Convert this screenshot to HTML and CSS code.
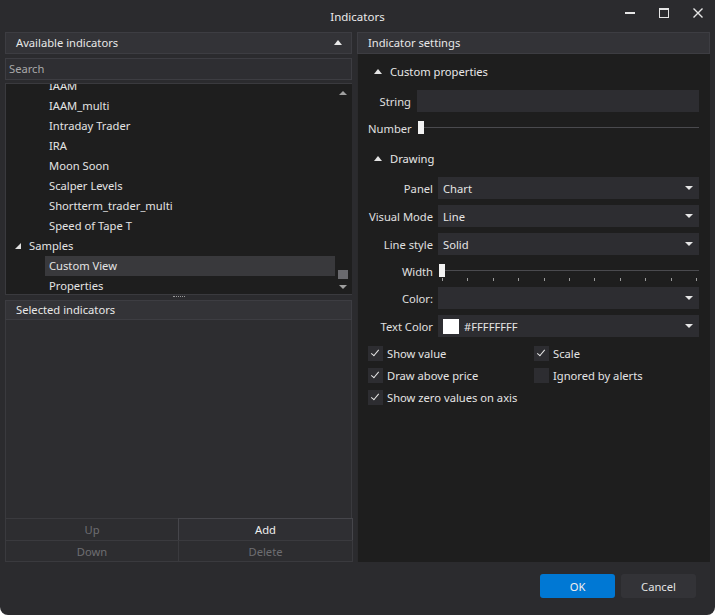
FILE: index.html
```html
<!DOCTYPE html>
<html>
<head>
<meta charset="utf-8">
<link rel="stylesheet" href="styles.css">
</head>
<body>
<div class="window">
  <div class="titlebar">
    <div class="title">Indicators</div>
    <div class="controls">
      <svg class="ctl" width="14" height="14" viewBox="0 0 14 14"><rect x="2" y="6" width="10" height="2" fill="#e6e6e6"/></svg>
      <svg class="ctl" width="14" height="14" viewBox="0 0 14 14"><rect x="2.5" y="2.5" width="9" height="9" fill="none" stroke="#e6e6e6" stroke-width="1"/><rect x="2" y="2" width="10" height="2" fill="#e6e6e6"/></svg>
      <svg class="ctl" width="14" height="14" viewBox="0 0 14 14"><path d="M2.5 2.5 L11.5 11.5 M11.5 2.5 L2.5 11.5" stroke="#e6e6e6" stroke-width="1.4"/></svg>
    </div>
  </div>
  <div class="main">
    <div class="left">
      <div class="phead"><span>Available indicators</span><span class="uptri"></span></div>
      <div class="search">Search</div>
      <div class="tree">
        <div class="tree-items">
          <div class="item">IAAM</div>
          <div class="item">IAAM_multi</div>
          <div class="item">Intraday Trader</div>
          <div class="item">IRA</div>
          <div class="item">Moon Soon</div>
          <div class="item">Scalper Levels</div>
          <div class="item">Shortterm_trader_multi</div>
          <div class="item">Speed of Tape T</div>
          <div class="item group"><span class="exp"></span>Samples</div>
          <div class="item sel">Custom View</div>
          <div class="item">Properties</div>
        </div>
        <div class="vscroll">
          <span class="sb-up"></span>
          <span class="sb-thumb"></span>
          <span class="sb-down"></span>
        </div>
      </div>
      <div class="splitter"><span class="grip"></span></div>
      <div class="phead small"><span>Selected indicators</span></div>
      <div class="selbody"></div>
      <div class="btngrid">
        <div class="btn dis">Up</div>
        <div class="btn act">Add</div>
        <div class="btn dis">Down</div>
        <div class="btn dis">Delete</div>
      </div>
    </div>
    <div class="right">
      <div class="phead"><span>Indicator settings</span></div>
      <div class="settings">
        <div class="sec"><span class="uptri w"></span>Custom properties</div>
        <div class="form f1">
          <div class="lbl">String</div>
          <div class="input"></div>
          <div class="lbl">Number</div>
          <div class="slider"><span class="thumb"></span><span class="track"></span></div>
        </div>
        <div class="sec sec2"><span class="uptri w"></span>Drawing</div>
        <div class="form f2">
          <div class="lbl">Panel</div>
          <div class="combo"><span>Chart</span><span class="dn"></span></div>
          <div class="lbl">Visual Mode</div>
          <div class="combo"><span>Line</span><span class="dn"></span></div>
          <div class="lbl">Line style</div>
          <div class="combo"><span>Solid</span><span class="dn"></span></div>
          <div class="lbl">Width</div>
          <div class="slider sw">
            <span class="thumb"></span><span class="track"></span>
            <div class="ticks"><i></i><i></i><i></i><i></i><i></i><i></i><i></i><i></i><i></i><i></i><i></i></div>
          </div>
          <div class="lbl">Color:</div>
          <div class="combo"><span></span><span class="dn"></span></div>
          <div class="lbl">Text Color</div>
          <div class="combo"><span class="swatchrow"><span class="swatch"></span>#FFFFFFFF</span><span class="dn"></span></div>
        </div>
        <div class="checks">
          <label class="chk"><span class="box on"></span>Show value</label>
          <label class="chk"><span class="box on"></span>Scale</label>
          <label class="chk"><span class="box on"></span>Draw above price</label>
          <label class="chk"><span class="box"></span>Ignored by alerts</label>
          <label class="chk"><span class="box on"></span>Show zero values on axis</label>
        </div>
      </div>
    </div>
  </div>
  <div class="footer">
    <div class="fbtn ok">OK</div>
    <div class="fbtn cancel">Cancel</div>
  </div>
</div>
</body>
</html>
```
FILE: styles.css
```css
html, body { margin: 0; padding: 0; background: #ffffff; }
body { width: 715px; height: 615px; overflow: hidden; }
.window {
  width: 715px; height: 615px; background: #2b2b2e;
  border-radius: 0 0 8px 8px; display: flex; flex-direction: column;
  font-family: "Noto Sans", "Open Sans", sans-serif; font-size: 11.2px; color: #e6e6e6;
  box-sizing: border-box; overflow: hidden;
}
.titlebar { height: 32px; position: relative; display: flex; align-items: center; justify-content: center; flex: none; }
.title { font-size: 11.5px; color: #ececec; }
.controls { position: absolute; right: 10px; top: 6px; display: flex; gap: 20px; }
.ctl { display: block; }
.main { flex: none; height: 530px; display: flex; gap: 5px; padding: 0 5px; }
.left { width: 347px; display: flex; flex-direction: column; }
.right { width: 353px; display: flex; flex-direction: column; }
.phead {
  height: 22px; box-sizing: border-box; background: #333337; border: 1px solid #3d3d42;
  display: flex; align-items: center; justify-content: space-between; padding: 0 9px 1px 10px;
  color: #e8e8e8; flex: none;
}
.phead.small { height: 20px; }
.uptri { width: 0; height: 0; border-left: 4px solid transparent; border-right: 4px solid transparent; border-bottom: 5px solid #e8e8e8; }
.search {
  margin-top: 4px; height: 22px; box-sizing: border-box; background: #2e2e32; border: 1px solid #3d3d42;
  color: #a8a8a8; padding-left: 3px; line-height: 20px; flex: none;
}
.tree {
  margin-top: 3px; height: 212px; box-sizing: border-box; display: flex; background: #1e1e1e;
  border: 1px solid #3a3a3e; border-right: none; flex: none; overflow: hidden;
}
.tree-items { flex: 1; margin-top: -8px; }
.item { height: 20px; line-height: 20px; padding-left: 43px; color: #e4e4e4; white-space: nowrap; }
.item.group { padding-left: 9px; display: flex; align-items: center; }
.exp { width: 0; height: 0; border-left: 6px solid transparent; border-bottom: 6px solid #e0e0e0; margin-right: 8px; }
.item.sel { background: #39393c; margin-left: 39px; padding-left: 4px; }
.vscroll { width: 17px; position: relative; background: #1e1e1e; }
.sb-up, .sb-down { position: absolute; left: 4px; width: 0; height: 0; border-left: 4px solid transparent; border-right: 4px solid transparent; }
.sb-up { top: 7px; border-bottom: 4px solid #a0a0a0; }
.sb-down { bottom: 5px; border-top: 4px solid #a0a0a0; }
.sb-thumb { position: absolute; left: 3px; top: 186px; width: 10px; height: 9px; background: #6a6a6e; }
.splitter { height: 5px; position: relative; flex: none; }
.grip { position: absolute; left: 168px; top: 1px; width: 12px; height: 1px; border-top: 1px dotted #9a9a9a; }
.selbody { height: 198px; box-sizing: border-box; background: #2d2d30; border-left: 1px solid #3a3a3e; border-right: 1px solid #3a3a3e; flex: none; }
.btngrid { display: grid; grid-template-columns: 173px 174px; grid-template-rows: 22px 21px; flex: none; }
.btn { box-sizing: border-box; border: 1px solid #3a3a3e; background: #2d2d30; display: flex; align-items: center; justify-content: center; color: #6e6e72; margin: 0 -1px -1px 0; }
.btn.act { color: #f0f0f0; border-color: #46464b; background: #2f2f33; }
.settings { flex: 1; background: #1e1e1e; padding: 7px 11px 0 10px; box-sizing: border-box; border-left: 1px solid #2a2a2c; }
.sec { height: 20px; display: flex; align-items: center; color: #e8e8e8; padding-left: 6px; }
.sec .uptri { margin-right: 8px; border-bottom-color: #e4e4e4; }
.sec2 { margin-top: 4px; }
.form { display: grid; align-items: center; }
.f1 { grid-template-columns: 43px 1fr; column-gap: 6px; margin-top: 9px; grid-template-rows: 22px 32px; }
.f2 { grid-template-columns: 65px 1fr; column-gap: 5px; row-gap: 6px; margin-top: 9px; grid-template-rows: 22px 22px 22px 20px 22px 22px; }
.lbl { text-align: right; color: #e0e0e0; white-space: nowrap; }
.input { height: 22px; background: #2d2d31; }
.combo { height: 22px; background: #2d2d31; display: flex; align-items: center; justify-content: space-between; padding: 0 6px 0 5px; color: #e6e6e6; }
.dn { width: 0; height: 0; border-left: 4px solid transparent; border-right: 4px solid transparent; border-top: 4px solid #e6e6e6; }
.swatchrow { display: flex; align-items: center; }
.swatch { width: 16px; height: 15px; background: #ffffff; margin-right: 5px; }
.slider { position: relative; height: 14px; }
.slider .thumb { position: absolute; left: 1px; top: 0; width: 6px; height: 13px; background: #f2f2f2; }
.slider .track { position: absolute; left: 7px; right: 0; top: 6px; height: 1px; background: #4a4a4e; }
.sw { height: 20px; align-self: stretch; }
.sw .thumb { top: 3px; }
.sw .track { top: 9px; }
.ticks { position: absolute; left: 4px; right: 2px; top: 17px; display: flex; justify-content: space-between; }
.ticks i { display: block; width: 1px; height: 3px; background: #9a9a9a; }
.checks { display: grid; grid-template-columns: 166px 1fr; row-gap: 7px; margin-top: 9px; }
.chk { display: flex; align-items: center; height: 15px; color: #e4e4e4; white-space: nowrap; }
.box { width: 15px; height: 15px; background: #2d2d31; margin-right: 4px; position: relative; flex: none; }
.box.on::after { content: ""; position: absolute; left: 5px; top: 2px; width: 3px; height: 7px; border-right: 1.5px solid #e6e6e6; border-bottom: 1.5px solid #e6e6e6; transform: rotate(40deg); }
.footer { flex: 1; display: flex; justify-content: flex-end; align-items: flex-start; padding: 12px 19px 0 0; gap: 6px; }
.fbtn { width: 75px; height: 24px; border-radius: 3px; display: flex; align-items: center; justify-content: center; color: #f0f0f0; }
.ok { background: #0078d4; }
.cancel { background: #333337; color: #e4e4e4; }
```
